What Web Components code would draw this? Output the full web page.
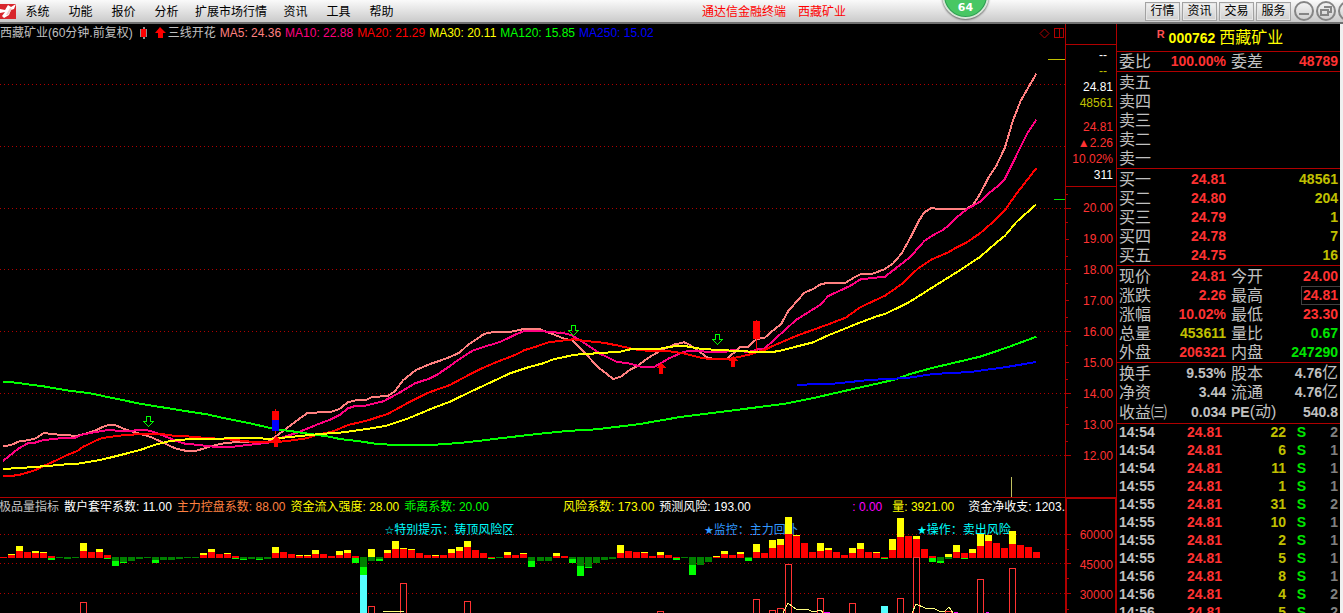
<!DOCTYPE html>
<html lang="zh-CN">
<head>
<meta charset="utf-8">
<title>通达信金融终端 西藏矿业</title>
<style>
  html, body { margin: 0; height: 100%; background: #000; }
  body {
    overflow: hidden;
    color: #c0c0c0;
    font: 12px/16px "Liberation Sans", "Noto Sans CJK SC", sans-serif;
    --line: #b00000;
    --up: #ff3232;
    --down: #00e600;
    --vol: #c0c000;
  }
</style>
</head>
<body>
<trade-app></trade-app>
<script>
/* Shared base: renders the class template into an open shadow root. */
class View extends HTMLElement {
  constructor() {
    super();
    this.attachShadow({ mode: 'open' }).innerHTML =
      `<style>* { box-sizing: border-box; }</style>` + this.view();
  }
  view() { return '<slot></slot>'; }
}

/* ---------- menu bar ---------- */
class CountBadge extends View {
  view() {
    return `<style>
      :host { display: flex; align-items: flex-end; justify-content: center; width: 47px; height: 47px;
        padding-bottom: 3px; border-radius: 50%; background: #48c764; border: 2px solid #d8e4d8;
        box-shadow: inset 0 0 0 1px #2f9a55, 0 1px 2px #666; color: #fff;
        font: bold 11px/12px "DejaVu Sans", "Liberation Sans", sans-serif; box-sizing: border-box; }
    </style><slot></slot>`;
  }
}
customElements.define('count-badge', CountBadge);

class MenuBar extends View {
  view() {
    const menus = ['系统', '功能', '报价', '分析', '扩展市场行情', '资讯', '工具', '帮助'];
    const tools = ['行情', '资讯', '交易', '服务'];
    const ring = (label, glyph) => `<button class="ring" aria-label="${label}"><svg width="20" height="20" viewBox="0 0 20 20"
      fill="none" stroke="#858585" stroke-width="2"><circle cx="10" cy="10" r="9"/>${glyph}</svg></button>`;
    return `<style>
      :host { display: flex; align-items: center; height: 24px; position: relative; overflow: hidden; color: #000;
        background: linear-gradient(#fafafa, #cacaca); border-bottom: 2px solid #707070; box-sizing: border-box; }
      svg { display: block; flex: none; }
      nav { display: flex; }
      nav, .title { padding-top: 2px; }
      button { font: inherit; color: inherit; }
      nav button { border: 0; background: none; min-width: 43px; padding: 0 7px; line-height: 20px; }
      .title { flex: 1; display: flex; justify-content: center; gap: 12px; color: #f00; }
      .tools { display: flex; gap: 2px; align-items: center; margin-right: -15px; }
      .tools button:not(.ring) { width: 35px; height: 19px; padding: 0; border: 1px solid #a2a2a2; line-height: 16px;
        background: linear-gradient(#f2f2f2, #cfcfcf); box-shadow: inset 0 0 0 1px #e6e6e6; }
      .ring { padding: 0; border: 0; background: none; border-radius: 50%; }
      .ring:nth-of-type(5) { margin-left: 1px; }
      count-badge { position: absolute; top: -28px; right: 354px; }
    </style>
    <svg width="16" height="16" viewBox="0 0 16 16"><rect y="1" width="16" height="15" fill="#d8262c"/>
      <path d="M0 6l5 1 3-5 3 2 5-3-2 5-3 1-2 5-5 3-2-2 3-4-5 1z" fill="#fff"/><path d="M6 12l4-7 2 1-4 6z" fill="#f4c8c8"/></svg>
    <nav>${menus.map(m => `<button>${m}</button>`).join('')}</nav>
    <div class="title"><span>通达信金融终端</span><span>西藏矿业</span></div>
    <div class="tools">${tools.map(t => `<button>${t}</button>`).join('')}
      ${ring('最小化', '<path d="M5 13h10"/>')}
      ${ring('还原', '<path d="M8 6h7v5h-3M5 9h7v5h-7z"/>')}
      ${ring('关闭', '<path d="M6 6l8 8M14 6l-8 8"/>')}</div>
    <count-badge>64</count-badge>`;
  }
}
customElements.define('menu-bar', MenuBar);

/* ---------- chart drawing helpers ---------- */
const gridLine = y => `<line x1="0" x2="1065" y1="${y + .5}" y2="${y + .5}" stroke="#b00000" stroke-dasharray="1 3"/>`;

/* Each segment is [originX, originY, "x,y x,y ..."], sampled at a third of a unit. */
const trace = (color, ...segments) => {
  const points = segments.flatMap(([ox, oy, list]) => list.split(' ').map(p => {
    const [x, y] = p.split(',');
    return (ox + x / 3).toFixed(1) + ',' + (oy + y / 3).toFixed(1);
  }));
  return `<polyline points="${points.join(' ')}" fill="none" stroke="${color}" stroke-width="2"/>`;
};
const sellMark = (x, y) => `<path transform="translate(${x} ${y})" d="M3.5 .5h4v5h3l-5 5-5-5h3z" fill="none" stroke="#0f0"/>`;
const buyMark = (x, y) => `<path transform="translate(${x} ${y})" d="M5 0l5 5h-3v6h-4v-6h-3z" fill="#f00"/>`;

class PriceChart extends View {
  view() {
    const legend = [['MA5: 24.36', '#ff8080'], ['MA10: 22.88', '#ff0080'], ['MA20: 21.29', '#f00'],
      ['MA30: 20.11', '#ff0'], ['MA120: 15.85', '#0f0'], ['MA250: 15.02', '#00f']];
    return `<style>
      :host { display: grid; grid-template: minmax(0, 1fr) / minmax(0, 1fr); border-bottom: 1px solid var(--line);
        box-sizing: border-box; min-height: 0; overflow: hidden; }
      .plot, header { grid-area: 1 / 1; }
      .plot { width: 100%; height: 100%; }
      header { display: flex; align-items: center; align-self: start; gap: 4px; height: 18px; white-space: nowrap; }
      .pair { display: flex; gap: 7px; margin: 0 -2px 0 3px; }
      .end { display: flex; gap: 4px; margin-left: auto; padding-right: 1px; }
    </style>
    <svg class="plot" viewBox="0 24 1065 473" preserveAspectRatio="none" shape-rendering="crispEdges">
      ${[84, 146, 208, 269, 331, 393, 455].map(gridLine).join('')}
      ${trace('#ff8080',
        [0, 370, '9,229 33,225 60,213 84,211 108,205 130,190 156,191 180,195 205,195 225,199 262,190 285,182 310,170 327,164 345,165 375,178 418,191 450,200 490,218 525,235 560,243 585,243 610,236 635,228 665,221 700,217 750,216 800,218 826,200 850,182 922,129 995,125 1018,117 1044,97 1070,90 1100,89 1115,82 1165,77 1185,63 1210,30 1248,0 1290,-18 1320,-28'],
        [450, 300, '0,171 30,157 54,134 80,117 102,102 126,97 180,96 222,87 270,88 300,99 340,115 368,122 400,154 445,202 490,237 512,230 540,209 562,198 600,170 635,150 675,133 703,127 720,135 745,153 775,174 800,178 830,176 850,160 870,142 893,141 920,117 944,113 968,92 993,73'],
        [740, 50, '145,783 193,728 218,718 242,703 265,698 317,698 340,684 362,672 396,672 435,657 460,640 485,610 510,565 535,515 553,487 576,473 590,477 678,477 700,464 720,432 745,384 770,345 795,292 818,214 842,152 889,71'])}
      ${trace('#ff0080',
        [0, 370, '9,273 55,236 85,219 105,218 127,211 180,205 226,203 245,194 275,188 310,182 330,180 350,182 390,182 437,180 462,186 490,197 530,213 555,221 590,224 640,230 700,230 750,224 805,218 830,208 860,198 895,187 950,164 995,147 1020,134 1044,115 1068,107 1095,107 1150,94 1195,70 1245,40 1285,27 1310,15 1332,0'],
        [450, 300, '0,198 30,176 70,151 110,138 150,126 200,102 222,93 268,92 295,96 340,99 365,106 400,127 450,161 500,185 540,191 575,201 612,201 635,188 655,176 700,156 720,152 790,156 825,156 845,150 895,156 925,148'],
        [740, 50, '73,896 168,810 240,765 265,738 330,708 362,688 435,680 485,641 510,622 553,573 576,557 605,542 625,528 650,502 680,478 720,455 745,431 770,411 795,386 842,290 862,250 889,209'])}
      ${trace('#f00',
        [0, 370, '9,318 33,318 60,314 105,301 130,288 160,275 200,256 230,244 250,230 300,206 325,201 370,196 420,192 480,191 520,197 560,199 620,204 700,209 760,216 830,216 870,212 920,205 950,195 1000,184 1044,165 1100,152 1165,131 1230,95 1285,68'],
        [450, 300, '0,255 50,228 100,203 150,182 200,163 222,151 255,141 295,127 370,118 400,122 460,128 500,136 560,149 600,153 660,154 700,160 755,174 790,178 830,178 870,170 905,162'],
        [740, 50, '50,907 73,900 98,888 168,858 265,823 317,803 362,771 435,737 485,702 535,655 576,628 625,607 650,592 680,577 720,550 770,506 795,480 830,430 889,355'])}
      ${trace('#0f0',
        [0, 370, '9,36 30,36 130,49 200,61 270,70 420,101 550,122 620,133 680,146 750,160 820,176 870,183 980,199 1020,207 1080,214 1130,222 1190,225 1290,225'],
        [450, 300, '0,431 50,427 150,415 270,401 350,393 440,388 570,372 690,351 850,331 1000,312 1100,292 1200,269'],
        [740, 50, '460,990 510,972 580,953 720,920 800,893 889,860'])}
      ${trace('#ff0',
        [0, 370, '9,297 60,294 130,289 200,283 235,281 300,270 350,258 420,240 470,223 510,213 560,208 640,206 760,204 820,207 860,202 950,193 1030,187 1100,177 1160,167 1220,147 1300,114'],
        [450, 300, '0,305 60,276 120,248 180,220 240,200 280,190 310,178 375,164 440,160 510,155 545,147 630,146 660,140 700,137 740,145 800,150 850,152'],
        [740, 50, '50,906 98,906 120,902 220,877 265,856 362,817 410,799 435,792 505,758 576,713 650,667 720,621 770,577 795,557 830,515 889,463'])}
      ${trace('#00f',
        [450, 300, '1040,256 1090,252 1150,251 1200,246'],
        [740, 50, '385,990 500,984 580,972 690,966 800,951 889,936'])}
      ${sellMark(143, 416)}${sellMark(568, 325)}${sellMark(712, 334)}
      <path d="M275 409h1v25h-1zM272 411h7v9h-7z" fill="#f00"/><rect x="272" y="420" width="7" height="11" fill="#00f"/>
      <path d="M756 320h1v31h-1zM753 321h7v18h-7z" fill="#f00"/>
      ${buyMark(271, 436)}${buyMark(656, 363)}${buyMark(728, 356)}
      <rect x="1048" y="59" width="17" height="1" fill="#c0c000"/><rect x="1054" y="199" width="11" height="1" fill="#00e600"/>
      <rect x="1011" y="477" width="1" height="20" fill="#c0c060"/>
    </svg>
    <header>
      <span>西藏矿业(60分钟.前复权)</span>
      <span class="pair"><svg width="8" height="12" shape-rendering="crispEdges"><path d="M3 0h2v12H3z" fill="#909090"/><path d="M0 2h7v8H0z" fill="#909090"/><path d="M1 2h5v8H1z" fill="#f00"/></svg>
      <svg width="11" height="12"><path d="M5 0l6 6H8v5H3V6H0z" fill="#f00"/></svg></span>
      <span>三线开花</span>
      ${legend.map(([t, c]) => `<span style="color:${c}">${t}</span>`).join('')}
      <span class="end"><svg width="11" height="11" fill="none" stroke="#b00000"><path d="M5.5 1l4.5 4.5L5.5 10 1 5.500z"/></svg>
      <svg width="10" height="11" fill="none" stroke="#b00000" shape-rendering="crispEdges"><path d="M.5 .5h9v9h-9zM5.500 .5v9"/></svg></span>
    </header>`;
  }
}
customElements.define('price-chart', PriceChart);

/* Money-flow bars. Each entry is "kind+level" pairs on an 8-unit pitch:
   y/r = top of the yellow/red part, d/b = bottom of the dark/bright green part. */
const FLOW = ('r67 y64r65 y56r61 r62 y61r63 y62r63 r66b70 d68 d69 d68 y53r61 r62 y59r62 r65b69 d71b76 d72b73 d71 d69 d68 ' +
  'd70b73 d70 d70 d69 d68 d68 y63r65 y59r62 r64 y63r64 r66b69 d69b70 d69 d69b70 d69 y57r63 r62 r64 y65r66 y65r66 y60r64 ' +
  'r64 r66 y61r65 y60r63 r66b73 d77b85 y59d71 d69b71 y60r63 y51r59 y58r59 y59r60 r63 r65 y65r66 r65 y59r63 y57r61 y51r57 ' +
  'r60 r63 r67b69 d68 y62r65 r65 y63r64 d71b77 d71 d71 y63r66 r66 d69b73 d76b86 d77b78 d73 d70 d69 y55r63 r61 r62 y62r63 ' +
  'r66 y62r65 r65 r67b70 d68 d75b85 d75 d72 y66r67 y61r64 r65 y62r64 d68b71 y54r62 r63 y50r58 y49r55 y27r44 y45r46 r53 r62 ' +
  'y53r61 y58r60 r62 r65 y58r63 y53r59 r62 y62r63 r67b69 y49r60 y28r47 r46 y46r49 r59 r66b72 d71b73 y64d69 y55r62 r63b69 ' +
  'y59r63 y44r56 y45r51 r53 r58 y41r54 r55 r57 r62').split(' ');
const VOLUME = { 10: 112, 46: 116, 50: 93, 58: 111, 82: 121, 94: 109, 96: 120, 97: 118, 98: 74, 102: 108,
  106: 113, 112: 108, 114: 67, 118: 121, 122: 89, 126: 78 };
const barX = i => i * 8 + (i > 66 ? 1 : 0);

class FlowChart extends View {
  bars() {
    return FLOW.map((code, i) => {
      const v = Object.fromEntries([...code.matchAll(/([yrdb])(\d+)/g)].map(m => [m[1], +m[2]]));
      const box = (a, b, c) => `<rect x="${barX(i)}" y="${490 + a}" width="7" height="${b - a}" fill="${c}"/>`;
      return (v.y ? box(v.y, v.r || 67, '#ff0') : '') + (v.r ? box(v.r, 68, '#f00') : '') +
        (v.d ? box(67, v.d, '#008000') : '') + (v.b ? box(v.d || 68, v.b, '#0f0') : '');
    }).join('');
  }
  view() {
    const item = ([t, c]) => `<span style="color:${c}">${t}</span>`;
    return `<style>
      :host { display: grid; grid-template: minmax(0, 1fr) / minmax(0, 1fr); min-height: 0; overflow: hidden; position: relative; }
      svg, header { grid-area: 1 / 1; }
      svg { width: 100%; height: 100%; position: relative; }
      header { display: flex; align-self: start; gap: 5px; white-space: nowrap; margin-left: -1px; padding-top: 1px; min-width: 0; }
      header i { flex: 7 0 0; }
      header .wide { flex: 10 0 0; }
      .money { display: flex; gap: 10px; }
      .money span:last-child { margin-left: 4px; }
      .note { position: absolute; top: 24px; white-space: nowrap; color: #0ff; }
      .note b { font: 11px/16px "DejaVu Sans", sans-serif; }
    </style>
    <span class="note" style="left:36.1%"><b>☆</b>特别提示：铸顶风险区</span>
    <span class="note" style="left:66.1%;color:#39f"><b>★</b>监控：主力回补</span>
    <span class="note" style="left:86.1%"><b>★</b>操作：卖出风险</span>
    <svg viewBox="0 498 1065 115" preserveAspectRatio="none" shape-rendering="crispEdges">
      ${[534, 563, 593].map(gridLine).join('')}
      ${this.bars()}
      <rect x="360" y="575" width="7" height="38" fill="#5ff"/><rect x="881" y="606" width="7" height="7" fill="#5ff"/>
      ${Object.entries(VOLUME).map(([i, top]) => `<rect x="${barX(+i) + .5}" y="${490.5 + top}" width="6" height="60" fill="${top === 67 ? 'none' : '#000'}" stroke="#ff3232"/>`).join('')}
      <g fill="none" stroke="#ffff80"><path d="M383 612l3-1h14l4 1M783 613l5-10 8 6h11l6 3 8-2 2 3M912 613l4-9 9 4h8l6 3h6l4-4 4 6"/></g>
      <path d="M824 612h6v1h-6zM954 612h4v1h-4zM986 612h3v1h-3z" fill="#f0f"/>
    </svg>
    <header>
      <span>极品量指标</span>
      ${[['散户套牢系数: 11.00', '#fff'], ['主力控盘系数: 88.00', '#ff8040'], ['资金流入强度: 28.00', '#ff0'], ['乖离系数: 20.00', '#0f0']].map(item).join('')}
      <i></i>
      ${[['风险系数: 173.00', '#ff0'], ['预测风险: 193.00', '#fff']].map(item).join('')}
      <i class="wide"></i>
      <div class="money">${[[': 0.00', '#f0f'], ['量: 3921.00', '#ff0'], ['资金净收支: 1203.', '#fff']].map(item).join('')}</div>
    </header>`;
  }
}
customElements.define('flow-chart', FlowChart);

/* ---------- axes ---------- */
const ticks = list => list.map(([y, w]) => `<rect y="${y}" width="${w}" height="1"/>`).join('');

class PriceAxis extends View {
  view() {
    const labels = [20, 19, 18, 17, 16, 15, 14, 13, 12];
    return `<style>
      :host { display: flex; flex-direction: column; position: relative; border: solid var(--line); border-width: 0 0 1px 1px;
        box-sizing: border-box; min-height: 0; overflow: hidden; text-align: right; color: var(--up); }
      .quote { margin-top: 20px; border: solid var(--line); border-width: 1px 0; height: 143px; padding: 2px 3px 0 0; }
      .gap { margin-top: 8px; }
      .quote div { height: 16px; }
      ol { list-style: none; margin: 6px 0 0; padding: 0 3px 0 0; line-height: 31px; }
      svg { position: absolute; left: 0; top: 0; width: 6px; height: 100%; }
      .quote .dash { padding-right: 6px; }
    </style>
    <svg viewBox="0 24 6 473" preserveAspectRatio="none" fill="#b00000" shape-rendering="crispEdges">
      ${ticks([[194, 2], [208, 5], [222, 2], [239, 3], [256, 2], [269, 5], [283, 2], [300, 3], [317, 2], [331, 5], [345, 2],
        [362, 3], [379, 2], [393, 5], [407, 2], [424, 3], [441, 2], [455, 5]])}</svg>
    <div class="quote">
      <div class="dash" style="color:#fff">--</div><div class="dash" style="color:var(--vol)">--</div>
      <div style="color:#fff">24.81</div><div style="color:var(--vol)">48561</div>
      <div class="gap">24.81</div><div>▲2.26</div><div>10.02%</div><div style="color:#fff">311</div>
    </div>
    <ol>${labels.map(n => `<li>${n.toFixed(2)}</li>`).join('')}</ol>`;
  }
}
customElements.define('price-axis', PriceAxis);

class FlowAxis extends View {
  view() {
    return `<style>
      :host { display: block; position: relative; border: solid var(--line); border-width: 1px 1px 0 2px;
        box-sizing: border-box; min-height: 0; overflow: hidden; text-align: right; color: var(--up); }
      ol { list-style: none; margin: 21px 0 0; padding: 0 2px 0 0; line-height: 30px; }
      svg { position: absolute; left: 0; top: 0; width: 6px; height: 100%; }
    </style>
    <svg viewBox="0 499 6 114" preserveAspectRatio="none" fill="#b00000" shape-rendering="crispEdges">
      ${ticks([[534, 4], [549, 2], [563, 4], [578, 2], [593, 4], [609, 2]])}</svg>
    <ol><li>60000</li><li>45000</li><li>30000</li></ol>`;
  }
}
customElements.define('flow-axis', FlowAxis);

/* ---------- quote panel ---------- */
const TONE = { r: 'var(--up)', g: 'var(--down)', y: 'var(--vol)', w: '#c0c0c0' };

/* Light-DOM text holds one row per line: label|value|tone|label|value|tone. */
class QuoteTable extends HTMLElement {
  connectedCallback() {
    if (!this.shadowRoot) this.attachShadow({ mode: 'open' }).innerHTML = this.view();
  }
  view() {
    const rows = this.textContent.trim().split('\n').map(r => r.trim().split('|'));
    const cell = (v = '', tone) => {
      const box = v.startsWith('*');
      const text = v.replace('*', '').replace('亿', '<span>亿</span>');
      return `<td style="color:${TONE[tone] || ''}"${box ? ' class="box"' : ''}>${text}</td>`;
    };
    return `<style>
      * { box-sizing: border-box; }
      :host { display: block; border-bottom: 1px solid var(--line); box-sizing: border-box; }
      table { width: 100%; table-layout: fixed; border-collapse: collapse; line-height: 19px; }
      th { width: 52px; padding: 0 0 0 2px; font-weight: normal; font-size: 16px; text-align: left; white-space: nowrap; }
      th:nth-of-type(2) { width: 48px; padding-left: 5px; }
      td { height: 19px; padding: 0; font-size: 14px; font-weight: bold; text-align: right; }
      td:nth-of-type(1) { width: 57px; }
      td:last-child { padding-right: 2px; }
      td span { font-weight: normal; font-size: 16px; line-height: 16px; }
      .box { background: linear-gradient(#000, #000) 100% 50% / 38px 17px no-repeat,
        linear-gradient(#404040, #404040) 100% 50% / 39px 19px no-repeat; }
      small { font-size: 14px; font-weight: bold; }
    </style><table>${rows.map(([a, av, at, b, bv, bt]) =>
      `<tr><th scope="row">${a}</th>${cell(av, at)}${b === undefined ? '<td></td>' : b === ''
        ? cell(bv, bt).replace('<td', '<td colspan="2"')
        : `<th scope="row">${b.replace('PE', '<small>PE</small>')}</th>` + cell(bv, bt)}</tr>`).join('')}</table>`;
  }
}
customElements.define('quote-table', QuoteTable);

class TickList extends View {
  view() {
    const rows = [['14:54', 22, 2], ['14:54', 6, 1], ['14:54', 11, 1], ['14:55', 1, 1], ['14:55', 31, 2], ['14:55', 10, 1],
      ['14:55', 2, 1], ['14:55', 5, 1], ['14:56', 8, 1], ['14:56', 4, 2], ['14:56', 5, 2]];
    return `<style>
      :host { display: block; overflow: hidden; min-height: 0; }
      table { width: 100%; table-layout: fixed; border-collapse: collapse; font: bold 14px/17px "Liberation Sans", sans-serif; }
      td { padding: 0 0 1px; height: 18px; text-align: right; }
      td:nth-child(1) { width: 50px; text-align: left; padding-left: 2px; }
      td:nth-child(2) { width: 55px; color: var(--up); }
      td:nth-child(3) { width: 64px; color: var(--vol); }
      td:nth-child(4) { width: 20px; color: var(--down); }
      td:nth-child(5) { color: #808080; padding-right: 2px; }
    </style><table>${rows.map(([t, v, n]) =>
      `<tr><td>${t}</td><td>24.81</td><td>${v}</td><td>S</td><td>${n}</td></tr>`).join('')}</table>`;
  }
}
customElements.define('tick-list', TickList);

class QuotePanel extends View {
  view() {
    return `<style>
      :host { display: flex; flex-direction: column; border-left: 1px solid var(--line); box-sizing: border-box; min-height: 0; overflow: hidden; }
      h1 { display: flex; justify-content: center; gap: 4px; margin: 0; height: 28px; flex: none; border-bottom: 1px solid var(--line);
        color: #ff0; font-size: 16px; font-weight: normal; line-height: 28px; padding-right: 17px; }
      h1 sup { color: #ff5050; font: bold 11px/20px "Liberation Sans", sans-serif; }
      h1 b { font-size: 14px; }
      .gap { padding-bottom: 1px; } .lead { padding-top: 1px; }
      tick-list { flex: 1; }
    </style>
    <h1><sup>R</sup><b>000762</b><span>西藏矿业</span></h1>
    <quote-table>委比|100.00%|r|委差|48789|r</quote-table>
    <quote-table class="lead">卖五
      卖四
      卖三
      卖二
      卖一</quote-table>
    <quote-table class="lead">买一|24.81|r||48561|y
      买二|24.80|r||204|y
      买三|24.79|r||1|y
      买四|24.78|r||7|y
      买五|24.75|r||16|y</quote-table>
    <quote-table class="lead">现价|24.81|r|今开|24.00|r
      涨跌|2.26|r|最高|*24.81|r
      涨幅|10.02%|r|最低|23.30|r
      总量|453611|y|量比|0.67|g
      外盘|206321|r|内盘|247290|g</quote-table>
    <quote-table class="lead gap">换手|9.53%|w|股本|4.76亿|w
      净资|3.44|w|流通|4.76亿|w
      收益㈢|0.034|w|PE(动)|540.8|w</quote-table>
    <tick-list></tick-list>`;
  }
}
customElements.define('quote-panel', QuotePanel);

/* ---------- page frame ---------- */
class TradeApp extends View {
  view() {
    return `<style>
      :host { display: flex; flex-direction: column; height: 100vh; }
      main { flex: 1; min-height: 0; display: grid; grid-template: minmax(0, 474fr) minmax(0, 115fr) / minmax(0, 1fr) 51px 224px;
        border-right: 3px solid #f0f0f0; }
      quote-panel { grid-area: 1 / 3 / 3 / 4; }
    </style>
    <menu-bar></menu-bar>
    <main>
      <price-chart></price-chart><price-axis></price-axis><quote-panel></quote-panel>
      <flow-chart></flow-chart><flow-axis></flow-axis>
    </main>`;
  }
}
customElements.define('trade-app', TradeApp);
</script>
</body>
</html>
